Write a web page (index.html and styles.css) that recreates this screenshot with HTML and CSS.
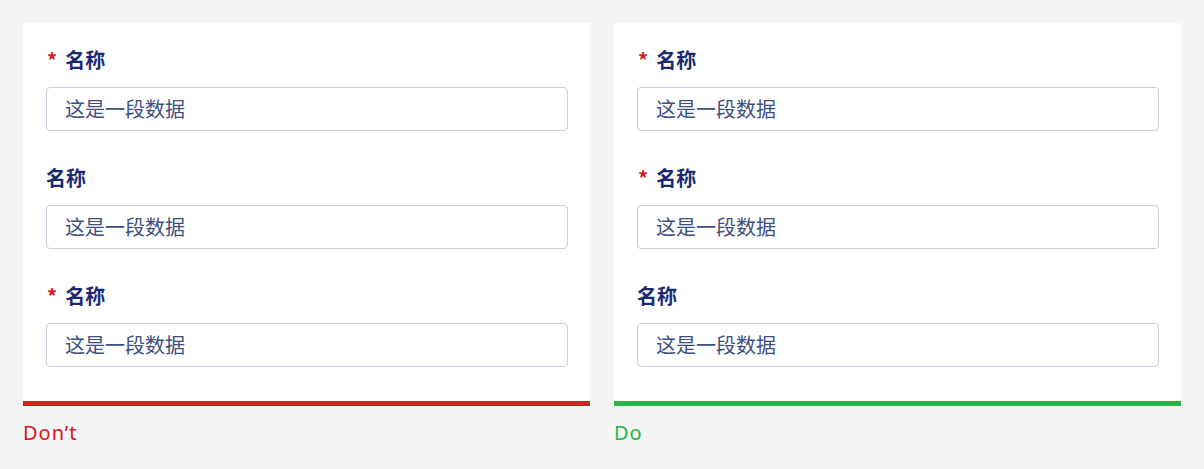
FILE: index.html
```html
<!DOCTYPE html>
<html lang="zh-CN">
  <head>
    <meta charset="UTF-8" />
    <title>必填标记</title>
    <link rel="stylesheet" href="styles.css">
  </head>
  <body>
    <div class="compare">
      <div class="case">
        <div class="panel dont">
          <div class="field">
            <div class="label"><span class="req">*</span>名称</div>
            <div class="input">这是一段数据</div>
          </div>
          <div class="field">
            <div class="label">名称</div>
            <div class="input">这是一段数据</div>
          </div>
          <div class="field">
            <div class="label"><span class="req">*</span>名称</div>
            <div class="input">这是一段数据</div>
          </div>
        </div>
        <div class="caption dont">Don’t</div>
      </div>
      <div class="case">
        <div class="panel do">
          <div class="field">
            <div class="label"><span class="req">*</span>名称</div>
            <div class="input">这是一段数据</div>
          </div>
          <div class="field">
            <div class="label"><span class="req">*</span>名称</div>
            <div class="input">这是一段数据</div>
          </div>
          <div class="field">
            <div class="label">名称</div>
            <div class="input">这是一段数据</div>
          </div>
        </div>
        <div class="caption do">Do</div>
      </div>
    </div>
  </body>
</html>
```

FILE: styles.css
```css
/* Do / Don't comparison */
body {
  margin: 0;
  background-color: #f4f5f7;
  font-family: "Noto Sans CJK SC", "Noto Sans", sans-serif;
}

.compare {
  display: flex;
  gap: 24px;
  padding: 23px 23px 0 23px;
}

.case {
  flex: 1;
}

.panel {
  background-color: #fff;
  padding: 25px 22px 34px 23px;
  display: flex;
  flex-direction: column;
  gap: 35px;
}

.panel.dont {
  border-bottom: 5px solid #de1a1a;
}

.panel.do {
  border-bottom: 5px solid #28b446;
}

.label {
  font-size: 20px;
  font-weight: bold;
  line-height: 24px;
  color: #1b2a70;
  margin-bottom: 15px;
}

.req {
  color: #d9161c;
  margin: 0 8px 0 1px;
}

.input {
  height: 42px;
  border: 1px solid #c9cedf;
  border-radius: 4px;
  padding: 0 18px;
  font-size: 20px;
  line-height: 42px;
  color: #3e4f80;
}

.caption {
  font-family: "Noto Sans", sans-serif;
  font-size: 20px;
  line-height: 26px;
  letter-spacing: 1px;
  margin-top: 14px;
}

.caption.dont {
  color: #d9161c;
}

.caption.do {
  color: #28b446;
}
```
